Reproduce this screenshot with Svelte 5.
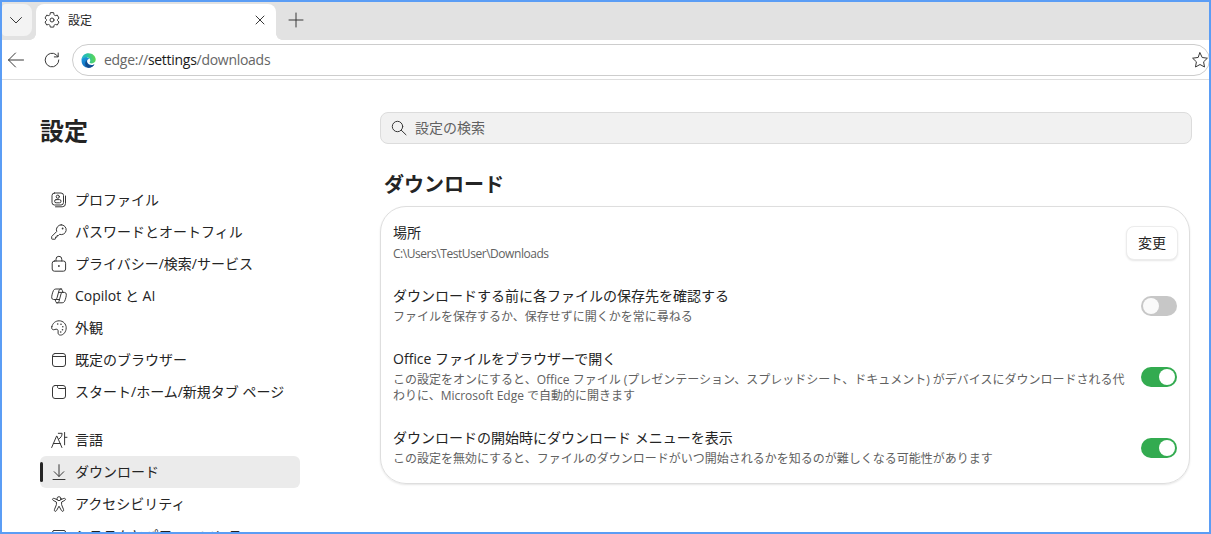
<script lang="ts">
	type NavItem = { icon: string; label: string; active?: boolean };

	const groups: NavItem[][] = [
		[
			{ icon: 'profile', label: 'プロファイル' },
			{ icon: 'key', label: 'パスワードとオートフィル' },
			{ icon: 'lock', label: 'プライバシー/検索/サービス' },
			{ icon: 'copilot', label: 'Copilot と AI' },
			{ icon: 'palette', label: '外観' },
			{ icon: 'browser', label: '既定のブラウザー' },
			{ icon: 'tab', label: 'スタート/ホーム/新規タブ ページ' }
		],
		[
			{ icon: 'language', label: '言語' },
			{ icon: 'download', label: 'ダウンロード', active: true },
			{ icon: 'person', label: 'アクセシビリティ' },
			{ icon: 'system', label: 'システムとパフォーマンス' }
		]
	];

	let settings = $state([
		{
			title: 'ダウンロードする前に各ファイルの保存先を確認する',
			text: 'ファイルを保存するか、保存せずに開くかを常に尋ねる',
			on: false
		},
		{
			title: 'Office ファイルをブラウザーで開く',
			text: 'この設定をオンにすると、Office ファイル (プレゼンテーション、スプレッドシート、ドキュメント) がデバイスにダウンロードされる代わりに、Microsoft Edge で自動的に開きます',
			on: true
		},
		{
			title: 'ダウンロードの開始時にダウンロード メニューを表示',
			text: 'この設定を無効にすると、ファイルのダウンロードがいつ開始されるかを知るのが難しくなる可能性があります',
			on: true
		}
	]);
</script>

{#snippet icon(name: string)}
	<svg class="icon" viewBox="0 0 16 16">
		{#if name === 'profile'}
			<rect x="1" y="1" width="11.5" height="12" rx="2.5" />
			<circle cx="6.8" cy="4.7" r="1.6" />
			<rect x="3.6" y="7.6" width="6.4" height="3.2" rx="1.5" />
			<path d="M14.5 4v7.5a3.3 3.3 0 0 1-3.3 3.3H4.5" />
		{:else if name === 'key'}
			<path d="M10.2.8a4.9 4.9 0 1 1-1.6 9.5L7.4 11.6H6v1.5H4.5v1.6c0 .3-.2.5-.5.5H1.2a.5.5 0 0 1-.5-.5v-2.2l5-5A4.9 4.9 0 0 1 10.2.8z" />
			<circle class="fill" cx="11.6" cy="4.5" r=".9" />
		{:else if name === 'lock'}
			<rect x="1.2" y="5" width="13.4" height="10.2" rx="2.2" />
			<path d="M5 5V3.2a2.9 2.9 0 0 1 5.8 0V5" />
			<circle class="fill" cx="7.9" cy="10" r=".9" />
		{:else if name === 'copilot'}
			<path d="M10.7 1H4.8C2.5 1 2 3.4 1.2 6.2.4 9 .3 11.5 2.6 11.5h1.5c1 0 1.6-.7 1.9-1.6L8 2.6C8.3 1.6 9 1 9.7 1c.9 0 1.400.6 1.700 1.600l.5 1.800" />
			<path d="M5.3 14.800h5.900c2.300 0 2.800-2.200 3.600-5 .8-2.800.9-5.400-1.400-5.400h-1.500c-1 0-1.600.7-1.900 1.600l-2 7.300c-.3 1-1 1.500-1.700 1.500-.9 0-1.400-.6-1.700-1.600l-.5-1.700M8 4.400h4M4 11.500h4" />
		{:else if name === 'palette'}
			<path d="M.8 6.800C1.600 3 4.600.8 8.200.8c4 0 7 3.200 7 7 0 4-2.700 7.300-5.600 7.300-2 0-2.800-1.200-2.500-3.100.3-1.800-.5-3.100-2-2.800-1.800.3-2.500.9-3.500.3C.7 9 .5 8 .8 6.800z" />
			<g class="fill">
				<circle cx="6.7" cy="4" r=".8" />
				<circle cx="10" cy="4.3" r=".8" />
				<circle cx="11.8" cy="6.8" r=".8" />
				<circle cx="11.5" cy="9.7" r=".8" />
				<circle cx="9.7" cy="12" r=".8" />
			</g>
		{:else if name === 'browser'}
			<rect x="1.5" y="1.5" width="13" height="13" rx="2.5" />
			<path d="M1.500 4.500h13" />
		{:else if name === 'tab'}
			<rect x="1.5" y="1.5" width="13" height="13" rx="2.5" />
			<path d="M6.500 1.500v1.300c0 1 .5 1.700 1.500 1.700h6.500" />
		{:else if name === 'language'}
			<path d="M.7 15.500 5.600 4h.3l5 11.500M2.300 11.500h7M7.300 1.300h3.800c0 2.700-1.300 4.500-3.300 5.700M13.600.5v12.300M13.600 5.300H16" />
		{:else if name === 'download'}
			<path d="M8 .7v11.600M3.200 7.700 8 12.500l4.800-4.800M2 15.500h12" />
		{:else if name === 'person'}
			<circle cx="8" cy="2.7" r="2" />
			<path d="M6 3.600 3.200 2.400a1.100 1.100 0 0 0-1 2L5.400 6v2.700l-2 5a1.100 1.100 0 0 0 2.100.9L8 10.200l2.500 4.400a1.100 1.100 0 0 0 2.100-.9l-2-5V6l3.200-1.600a1.100 1.100 0 0 0-1-2L10 3.600" />
		{:else if name === 'system'}
			<rect x="1.5" y="2.5" width="13" height="10" rx="1.5" />
		{:else if name === 'gear'}
			<circle cx="8" cy="8" r="2" />
			<path d="m6.300 1-.4 1.700c-.2.7-.9 1.100-1.600.9l-1.600-.5L1 6.100l1.200 1.100c.5.5.5 1.200 0 1.700L1 10l1.700 3 1.600-.5c.7-.2 1.400.2 1.600.9l.4 1.700h3.400l.4-1.700c.2-.7.9-1.100 1.600-.9l1.600.5L15 10l-1.200-1.100c-.5-.5-.5-1.200 0-1.700L15 6.100l-1.700-3-1.600.5c-.7.2-1.400-.2-1.600-.9L9.700 1z" />
		{:else if name === 'back'}
			<path d="M15.500 8H.5M7.500 1l-7 7 7 7" />
		{:else if name === 'reload'}
			<path d="M14.800 8A6.800 6.800 0 1 1 12.200 2.700L14 4.700M14.200 1v3.900h-3.900" />
		{:else if name === 'star'}
			<path d="m8 .8 2.200 4.700 5.200.7-3.800 3.600.9 5.200L8 12.500 3.500 15l.9-5.200L.6 6.200l5.200-.7z" />
		{:else if name === 'search'}
			<circle cx="6.5" cy="6.5" r="5.2" />
			<path d="m10.300 10.300 4.700 4.500" />
		{:else if name === 'plus'}
			<path d="M8 1v14M1 8h14" />
		{:else if name === 'close'}
			<path d="m4 4 8 8M12 4l-8 8" />
		{:else if name === 'chevron'}
			<path d="m2.500 5.500 5.500 5.500 5.500-5.500" />
		{/if}
	</svg>
{/snippet}

<div class="window">
	<div class="tabs">
		<button class="menu" aria-label="タブ">{@render icon('chevron')}</button>
		<div class="tab">
			{@render icon('gear')}
			<span>設定</span>
			{@render icon('close')}
		</div>
		<button class="new" aria-label="新しいタブ">{@render icon('plus')}</button>
	</div>

	<div class="toolbar">
		{@render icon('back')}
		{@render icon('reload')}
		<div class="address">
			<svg class="logo" viewBox="0 0 16 16">
				<defs>
					<linearGradient id="top" x1="0" y1=".5" x2="1" y2=".4">
						<stop offset="0" stop-color="#22b0d6" />
						<stop offset=".45" stop-color="#2cc4a0" />
						<stop offset="1" stop-color="#62d84c" />
					</linearGradient>
					<linearGradient id="side" x1="0" y1="0" x2=".6" y2="1">
						<stop offset="0" stop-color="#1b9ce2" />
						<stop offset="1" stop-color="#1262b4" />
					</linearGradient>
				</defs>
				<path fill="url(#side)" d="M.8 6.400C2 3.800 7.300 3.700 8.600 6 6.400 6.600 5.800 9 7.300 11c1.600 2.200 4.800 2.300 7 .9-1.500 2.700-4 4-6.700 3.800C3.300 15.500-.3 11.500.8 6.400z" />
				<path fill="#114a8b" d="M6.500 7.500c-1 2.800 1 5.600 4 5.700 1.500.1 2.800-.4 3.900-1.200-1.500 2.700-4 4-6.700 3.700-3.900-1.200-4.200-6.400-1.200-8.200z" />
				<path fill="url(#top)" d="M.5 7.500C.8 3 4 .3 8 .3c4.400 0 7.700 3.200 7.700 6.700 0 2.700-2 4.100-4.200 4.100-2.100 0-2.700-.8-2.100-1.500 1.400-2-.2-5-3.600-5C3.200 4.600 1.300 5.700.5 7.500z" />
			</svg>
			<span class="url">edge://<b>settings</b>/downloads</span>
			{@render icon('star')}
		</div>
	</div>

	<div class="page">
		<aside>
			<h1>設定</h1>
			<nav>
				{#each groups as group}
					<ul>
						{#each group as item}
							<li class:active={item.active}>
								{@render icon(item.icon)}
								<span>{item.label}</span>
							</li>
						{/each}
					</ul>
				{/each}
			</nav>
		</aside>

		<main>
			<div class="search">
				{@render icon('search')}
				<span>設定の検索</span>
			</div>
			<h2>ダウンロード</h2>
			<section>
				<div class="row">
					<div class="info">
						<h3>場所</h3>
						<p class="path">C:\Users\TestUser\Downloads</p>
					</div>
					<button class="change">変更</button>
				</div>
				{#each settings as setting}
					<div class="row">
						<div class="info">
							<h3>{setting.title}</h3>
							<p>{setting.text}</p>
						</div>
						<button
							class="switch"
							class:on={setting.on}
							role="switch"
							aria-checked={setting.on}
							aria-label={setting.title}
							onclick={() => (setting.on = !setting.on)}
						></button>
					</div>
				{/each}
			</section>
		</main>
	</div>
</div>

<style>
	:global(body) {
		font-family: 'Open Sans', 'Noto Sans CJK JP', sans-serif;
		color: #242424;
	}

	.window {
		display: flex;
		flex-direction: column;
		box-sizing: border-box;
		height: 534px;
		border: 2px solid #5b9df5;
		background: #fff;
		overflow: hidden;
	}

	button {
		padding: 0;
		border: 0;
		font: inherit;
		color: inherit;
	}

	h1,
	h2,
	h3,
	p,
	ul {
		margin: 0;
		padding: 0;
	}

	.icon {
		flex: none;
		width: 16px;
		height: 16px;
		fill: none;
		stroke: #383838;
		stroke-width: 1;
		stroke-linecap: round;
		stroke-linejoin: round;
		overflow: visible;
	}

	.fill {
		fill: #383838;
		stroke: none;
	}

	.tabs {
		display: flex;
		flex: none;
		height: 38px;
		background: #e2e2e2;
	}

	.menu {
		display: flex;
		align-items: center;
		justify-content: center;
		width: 30px;
		height: 32px;
		margin: 2px 4px 0 0;
		padding-right: 2px;
		box-sizing: border-box;
		border-radius: 4px 8px 8px 4px;
		background: #f3f3f3;
	}

	.tab {
		position: relative;
		display: flex;
		align-items: center;
		box-sizing: border-box;
		width: 240px;
		margin-top: 2px;
		padding: 0 8px 4px;
		border-radius: 8px 8px 0 0;
		background: #fff;
		font-size: 12px;
	}

	/* Curved feet where the tab meets the toolbar */
	.tab::before,
	.tab::after {
		content: '';
		position: absolute;
		bottom: 0;
		width: 6px;
		height: 6px;
	}

	.tab::before {
		right: 100%;
		background: radial-gradient(circle at 0 0, transparent 5.5px, #fff 6px);
	}

	.tab::after {
		left: 100%;
		background: radial-gradient(circle at 100% 0, transparent 5.5px, #fff 6px);
	}

	.tab span {
		flex: 1;
		margin-left: 8px;
	}

	.new {
		display: flex;
		margin: 10px 0 0 12px;
		height: 16px;
		background: none;
	}

	.toolbar {
		display: flex;
		flex: none;
		align-items: center;
		height: 40px;
		box-sizing: border-box;
		padding-left: 6px;
		border-bottom: 1px solid #dedede;
	}

	.toolbar > .icon + .icon {
		margin-left: 20px;
	}

	.address {
		display: flex;
		flex: 1;
		align-items: center;
		box-sizing: border-box;
		height: 32px;
		margin: 1px -1px 0 12px;
		padding: 0 1px 0 8px;
		border: 1px solid #cdcdcd;
		border-radius: 16px;
	}

	.logo {
		width: 15px;
		height: 15px;
	}

	.url {
		flex: 1;
		margin-left: 8px;
		padding-bottom: 1px;
		font-size: 14px;
		letter-spacing: -0.28px;
		color: #666;
	}

	.url b {
		font-weight: 400;
		color: #1a1a1a;
	}

	.page {
		display: flex;
		flex: 1;
		min-height: 0;
		overflow: hidden;
	}

	aside {
		flex: none;
		width: 260px;
		padding: 34px 80px 0 38px;
	}

	h1 {
		font-size: 24px;
		line-height: 34px;
	}

	nav {
		display: flex;
		flex-direction: column;
		gap: 16px;
		margin-top: 36px;
	}

	ul {
		list-style: none;
	}

	li {
		position: relative;
		display: flex;
		align-items: center;
		gap: 8px;
		height: 32px;
		padding-left: 11px;
		border-radius: 6px;
		font-size: 14px;
	}

	li span {
		padding-bottom: 2px;
	}

	li.active {
		background: #ebebeb;
	}

	li.active::before {
		content: '';
		position: absolute;
		left: 0;
		top: 6px;
		width: 3px;
		height: 20px;
		border-radius: 2px;
		background: #242424;
	}

	main {
		flex: none;
		width: 812px;
		padding-top: 32px;
	}

	.search {
		display: flex;
		align-items: center;
		gap: 8px;
		box-sizing: border-box;
		height: 32px;
		padding-left: 10px;
		border: 1px solid #dcdcdc;
		border-radius: 8px;
		background: #f1f1f1;
		font-size: 14px;
		color: #616161;
	}

	.search span {
		padding-bottom: 2px;
	}

	h2 {
		margin: 27px 0 7px 4px;
		font-size: 20px;
		line-height: 28px;
	}

	section {
		box-sizing: border-box;
		width: 810px;
		padding: 4px 12px;
		border: 1px solid #dedede;
		border-radius: 26px;
		box-shadow: 0 1px 2px rgba(0, 0, 0, 0.1);
	}

	.row {
		display: flex;
		align-items: center;
		justify-content: space-between;
		padding: 12px 0;
	}

	.info {
		width: 734px;
	}

	h3 {
		font-size: 14px;
		font-weight: 400;
		line-height: 20px;
	}

	p {
		margin-top: 3px;
		font-size: 12px;
		line-height: 16px;
		color: #616161;
	}

	.path {
		letter-spacing: -0.45px;
	}

	.change {
		width: 52px;
		height: 34px;
		margin: -4px -1px -4px 0;
		padding-bottom: 1px;
		border: 1px solid #ececec;
		border-radius: 8px;
		background: #fff;
		box-shadow: 0 1px 2px rgba(0, 0, 0, 0.1);
		font-size: 14px;
	}

	.switch {
		display: flex;
		align-items: center;
		width: 36px;
		height: 20px;
		padding: 0 2px;
		border-radius: 10px;
		background: #c7c7c7;
	}

	.switch::before {
		content: '';
		width: 16px;
		height: 16px;
		border-radius: 50%;
		background: #fafafa;
	}

	.switch.on {
		justify-content: flex-end;
		background: #33ab50;
	}

	.switch.on::before {
		background: #fff;
	}
</style>
